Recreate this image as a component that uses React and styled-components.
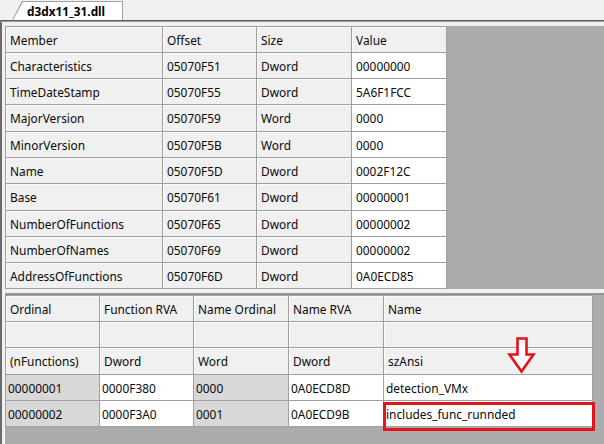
import styled, { createGlobalStyle } from 'styled-components'

const GlobalStyle = createGlobalStyle`
  html, body {
    margin: 0;
    padding: 0;
    background: #f0f0f0;
  }
  body {
    font-family: 'Noto Sans', 'Open Sans', sans-serif;
    color: #000;
  }
`

const headerFields = [
  ['Characteristics', '05070F51', 'Dword', '00000000'],
  ['TimeDateStamp', '05070F55', 'Dword', '5A6F1FCC'],
  ['MajorVersion', '05070F59', 'Word', '0000'],
  ['MinorVersion', '05070F5B', 'Word', '0000'],
  ['Name', '05070F5D', 'Dword', '0002F12C'],
  ['Base', '05070F61', 'Dword', '00000001'],
  ['NumberOfFunctions', '05070F65', 'Dword', '00000002'],
  ['NumberOfNames', '05070F69', 'Dword', '00000002'],
  ['AddressOfFunctions', '05070F6D', 'Dword', '0A0ECD85'],
]

const exportHead = [
  ['Ordinal', 'Function RVA', 'Name Ordinal', 'Name RVA', 'Name'],
  ['', '', '', '', ''],
  ['(nFunctions)', 'Dword', 'Word', 'Dword', 'szAnsi'],
]

const exportRows = [
  ['00000001', '0000F380', '0000', '0A0ECD8D', 'detection_VMx'],
  ['00000002', '0000F3A0', '0001', '0A0ECD9B', 'includes_func_runnded'],
]

// grey columns in the export rows
const exportTones = ['grey', 'white', 'grey', 'white', 'white']

export default function App() {
  return (
    <Window>
      <GlobalStyle />
      <TabBar>
        <TabEdge>
          <Tab>d3dx11_31.dll</Tab>
        </TabEdge>
      </TabBar>
      <Divider />
      <Panel>
        <GridView $height={263}>
          <Table
            $cols="157px 94px 95px 95px"
            $rows="26px 26px 26px 27px 26px 26px 27px 26px 26px 26px"
          >
            {['Member', 'Offset', 'Size', 'Value'].map((h) => (
              <Cell key={h} $tone="head">{h}</Cell>
            ))}
            {headerFields.map((row) =>
              row.map((v, i) => (
                <Cell key={row[0] + i} $tone={i === 3 ? 'white' : 'head'}>
                  {v}
                </Cell>
              ))
            )}
          </Table>
        </GridView>
        <Splitter />
        <GridView $fill>
          <Table
            $cols="94px 94px 95px 95px 209px"
            $rows="26px 26px 27px 26px 26px"
          >
            {exportHead.map((row, r) =>
              row.map((v, i) => (
                <Cell key={'h' + r + i} $tone="head">{v}</Cell>
              ))
            )}
            {exportRows.map((row, r) =>
              row.map((v, i) => (
                <Cell key={'d' + r + i} $tone={exportTones[i]} $tight>
                  {v}
                </Cell>
              ))
            )}
          </Table>
          <ArrowMark width="32" height="38" viewBox="0 0 32 38">
            <path
              d="M11.5 1.5 H20.5 V17.5 H27.5 L15.5 34.5 L3.5 17.5 H11.5 Z"
              fill="#fff"
              stroke="#e3141c"
              strokeWidth="2.6"
              strokeLinejoin="miter"
            />
          </ArrowMark>
          <Highlight />
        </GridView>
      </Panel>
    </Window>
  )
}

const Window = styled.div`
  width: 604px;
  height: 444px;
  display: flex;
  flex-direction: column;
  overflow: hidden;
`

const TabBar = styled.div`
  height: 20px;
  padding-top: 1px;
  box-sizing: border-box;
  display: flex;
  padding-left: 12px;
`

const TabEdge = styled.div`
  width: 111px;
  height: 19px;
  background: #a0a0a0;
  padding: 1px 1px 0 1px;
  box-sizing: border-box;
  clip-path: polygon(10px 0, 100% 0, 100% 100%, 0 100%);
`

const Tab = styled.div`
  height: 100%;
  background: #fff;
  clip-path: polygon(10px 0, 100% 0, 100% 100%, 0 100%);
  font-size: 11.8px;
  font-weight: 700;
  line-height: 18px;
  padding-left: 14px;
  color: #000;
  white-space: nowrap;
`

const Divider = styled.div`
  height: 2px;
  box-sizing: border-box;
  border-top: 1px solid #5e5e5e;
  border-bottom: 1px solid #9c9c9c;
`

const Panel = styled.div`
  flex: 1;
  display: flex;
  flex-direction: column;
  border-left: 2px solid #6a6a6a;
  padding: 4px 0 0 3px;
  min-height: 0;
`

const GridView = styled.div`
  position: relative;
  background: #ababab;
  height: ${({ $height }) => ($height ? `${$height}px` : 'auto')};
  flex: ${({ $fill }) => ($fill ? 1 : 'none')};
  overflow: hidden;
`

const Splitter = styled.div`
  height: 6px;
  box-sizing: border-box;
  background: #f0f0f0;
  border-bottom: 2px solid #959595;
`

const Table = styled.div`
  display: grid;
  grid-template-columns: ${({ $cols }) => $cols};
  grid-template-rows: ${({ $rows }) => $rows};
  width: max-content;
  border-top: 1px solid #a0a0a0;
  border-left: 1px solid #a0a0a0;
`

const toneBg = { head: '#f0f0f0', grey: '#d8d8d8', white: '#ffffff' }

const Cell = styled.div`
  box-sizing: border-box;
  display: flex;
  align-items: center;
  padding: 0 ${({ $tight }) => ($tight ? '2px' : '4px')};
  background: ${({ $tone }) => toneBg[$tone]};
  border-right: 1px solid #a0a0a0;
  border-bottom: 1px solid #a0a0a0;
  box-shadow: ${({ $tone }) =>
    $tone === 'head' ? 'inset 1px 1px 0 #fbfbfb' : 'none'};
  font-size: 11.9px;
  color: #0a0a0a;
  white-space: nowrap;
  overflow: hidden;
`

const ArrowMark = styled.svg`
  position: absolute;
  left: 501px;
  top: 42px;
`

const Highlight = styled.div`
  position: absolute;
  left: 378px;
  top: 107px;
  width: 212px;
  height: 29px;
  box-sizing: border-box;
  border: 3px solid #e3141c;
`
